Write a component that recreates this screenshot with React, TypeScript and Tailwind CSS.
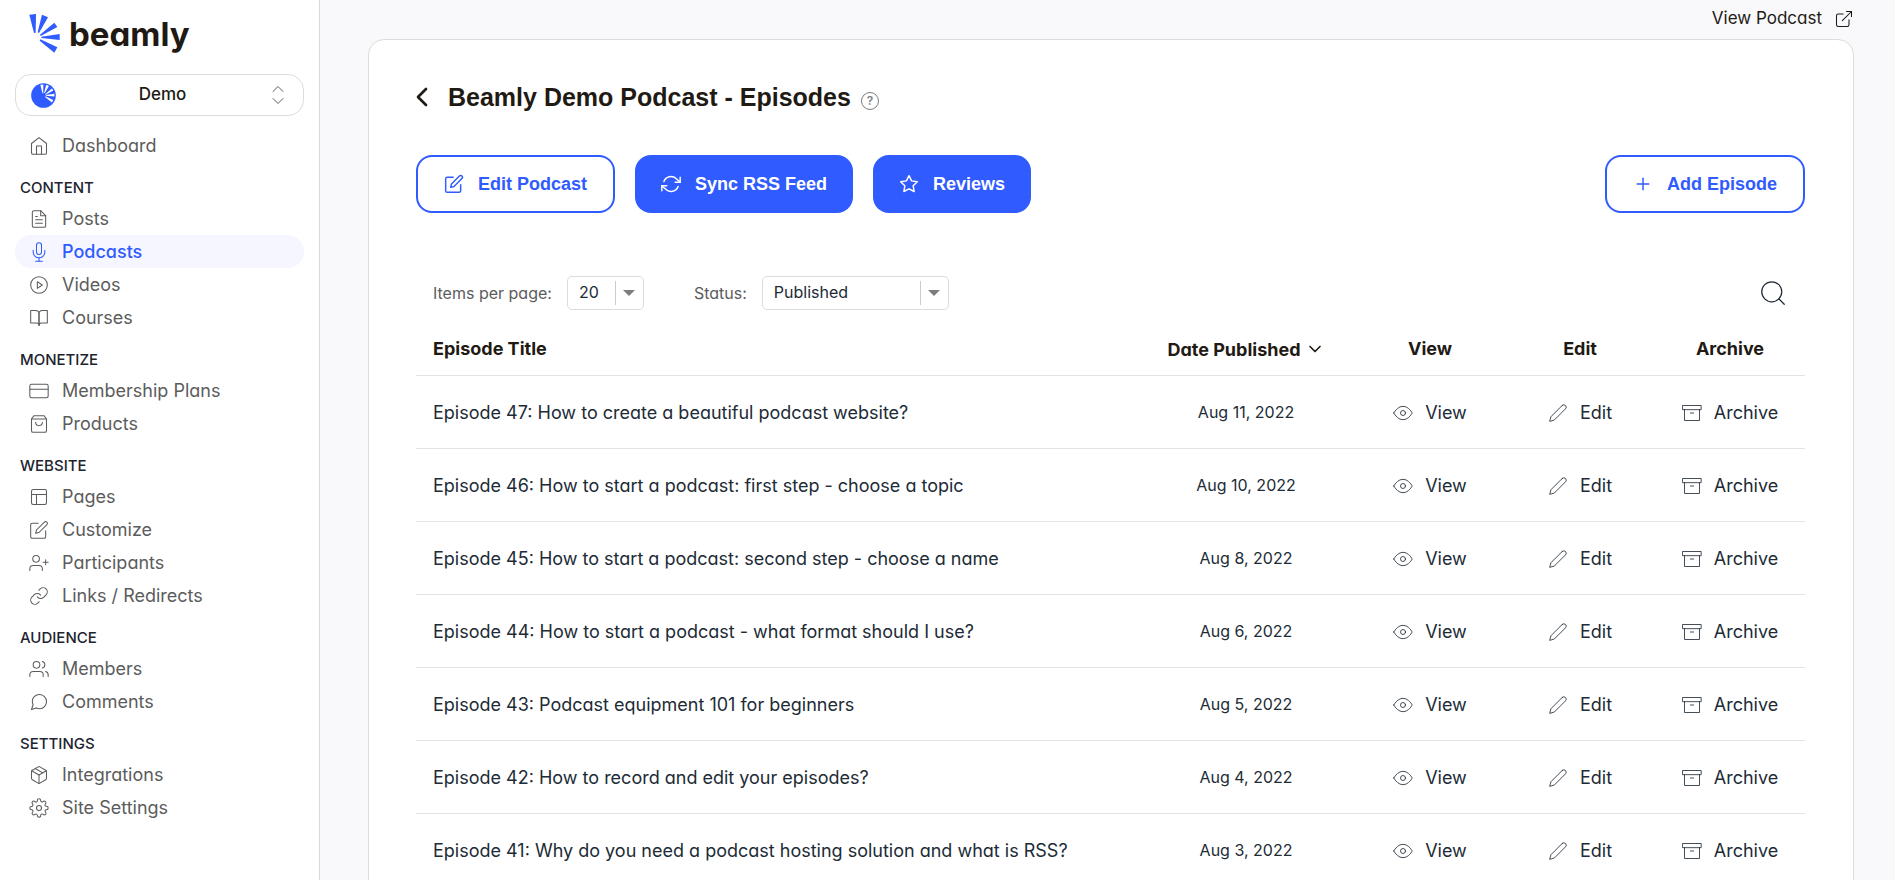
import { useState } from "react";
import { IconType } from "react-icons";
import {
  FiArchive,
  FiBookOpen,
  FiChevronDown,
  FiChevronLeft,
  FiCreditCard,
  FiEdit,
  FiEdit2,
  FiExternalLink,
  FiEye,
  FiFileText,
  FiHome,
  FiLayout,
  FiLink,
  FiMessageCircle,
  FiMic,
  FiPackage,
  FiPlayCircle,
  FiPlus,
  FiRefreshCw,
  FiSearch,
  FiSettings,
  FiShoppingBag,
  FiStar,
  FiUserPlus,
  FiUsers,
} from "react-icons/fi";

interface NavItem {
  label: string;
  icon: IconType;
}

interface NavSection {
  title?: string;
  items: NavItem[];
}

interface Episode {
  title: string;
  date: string;
}

const sections: NavSection[] = [
  { items: [{ label: "Dashboard", icon: FiHome }] },
  {
    title: "CONTENT",
    items: [
      { label: "Posts", icon: FiFileText },
      { label: "Podcasts", icon: FiMic },
      { label: "Videos", icon: FiPlayCircle },
      { label: "Courses", icon: FiBookOpen },
    ],
  },
  {
    title: "MONETIZE",
    items: [
      { label: "Membership Plans", icon: FiCreditCard },
      { label: "Products", icon: FiShoppingBag },
    ],
  },
  {
    title: "WEBSITE",
    items: [
      { label: "Pages", icon: FiLayout },
      { label: "Customize", icon: FiEdit },
      { label: "Participants", icon: FiUserPlus },
      { label: "Links / Redirects", icon: FiLink },
    ],
  },
  {
    title: "AUDIENCE",
    items: [
      { label: "Members", icon: FiUsers },
      { label: "Comments", icon: FiMessageCircle },
    ],
  },
  {
    title: "SETTINGS",
    items: [
      { label: "Integrations", icon: FiPackage },
      { label: "Site Settings", icon: FiSettings },
    ],
  },
];

const episodes: Episode[] = [
  { title: "Episode 47: How to create a beautiful podcast website?", date: "Aug 11, 2022" },
  { title: "Episode 46: How to start a podcast: first step - choose a topic", date: "Aug 10, 2022" },
  { title: "Episode 45: How to start a podcast: second step - choose a name", date: "Aug 8, 2022" },
  { title: "Episode 44: How to start a podcast - what format should I use?", date: "Aug 6, 2022" },
  { title: "Episode 43: Podcast equipment 101 for beginners", date: "Aug 5, 2022" },
  { title: "Episode 42: How to record and edit your episodes?", date: "Aug 4, 2022" },
  { title: "Episode 41: Why do you need a podcast hosting solution and what is RSS?", date: "Aug 3, 2022" },
];

const Beams = () => (
  <>
    <path d="M26 29 46 27 45 83 40 84Z" />
    <path d="M64 29 82 37 55 84 51 82Z" />
    <path d="M101 53 110 66 60 93 58 89Z" />
    <path d="M117 87 117 105 62 99 62 95Z" />
    <path d="M110 127 101 143 57 107 59 103Z" />
  </>
);

const Sidebar = () => {
  let [active, setActive] = useState("Podcasts");

  return (
    <aside className="w-80 shrink-0 border-r border-[#d9dadc] bg-white px-[15px]">
      <a href="#" className="flex items-center gap-2 pt-[13px] pl-[13px]">
        <svg viewBox="22 24 99 123" className="h-[41px] w-[33px] fill-[#2f5bff]">
          <Beams />
        </svg>
        <span className="text-[33px] leading-9 font-bold text-[#1f1a14]">
          beamly
        </span>
      </a>

      <button className="mt-5 flex h-[42px] w-full items-center justify-between rounded-2xl border border-[#dcdcdc] pr-4 pl-[15px]">
        <svg viewBox="0 0 76 76" className="size-[25px]">
          <circle cx="38" cy="38" r="37.5" className="fill-[#2f5bff]" />
          <g transform="translate(16 -8) scale(.47)" className="fill-white">
            <Beams />
          </g>
        </svg>
        <span className="text-[17px] font-medium text-[#1f1a14]">Demo</span>
        <svg
          viewBox="0 0 18 20"
          className="h-5 w-[18px] fill-none stroke-[#5c5c5c]"
          strokeLinecap="round"
          strokeLinejoin="round"
        >
          <path d="M4 6.500 9 1.500l5 5M4 13.500l5 5 5-5" />
        </svg>
      </button>

      <nav className="mt-[13px]">
        {sections.map((section) => (
          <div key={section.items[0].label}>
            {section.title && (
              <h3 className="pt-4 pb-1 pl-[5px] text-[15px] leading-5 font-medium text-[#1c2430]">
                {section.title}
              </h3>
            )}
            {section.items.map(({ label, icon: Icon }) => (
              <a
                key={label}
                href="#"
                onClick={() => setActive(label)}
                className={`flex h-[33px] items-center gap-[13px] rounded-2xl pl-[14px] text-[18px] ${
                  active === label
                    ? "bg-[#f5f6ff] font-medium text-[#2f5bff]"
                    : "text-[#5c5c5c]"
                }`}
              >
                <Icon size={20} strokeWidth={1.25} />
                {label}
              </a>
            ))}
          </div>
        ))}
      </nav>
    </aside>
  );
};

interface SelectProps {
  id: string;
  label: string;
  options: string[];
  className: string;
}

const Select = ({ id, label, options, className }: SelectProps) => (
  <div className="flex items-center gap-[15px]">
    <label htmlFor={id} className="text-[16px] text-[#5c5c5c]">
      {label}
    </label>
    <div className={`relative h-[34px] ${className}`}>
      <select
        id={id}
        className="size-full appearance-none rounded-[5px] border border-[#dcdcdc] bg-white pb-[2px] pl-[11px] text-[16px] text-[#212b36] outline-none"
      >
        {options.map((option) => (
          <option key={option}>{option}</option>
        ))}
      </select>
      <div className="pointer-events-none absolute inset-y-[5px] right-[9px] flex items-center gap-[7px]">
        <span className="h-full w-px bg-[#cccccc]" />
        <svg viewBox="0 0 12 6" className="h-[6px] w-3 fill-[#7d7d7d]">
          <path d="M0 0h12L6 6Z" />
        </svg>
      </div>
    </div>
  </div>
);

interface BoxedButtonProps {
  icon: IconType;
  filled?: boolean;
  children: string;
}

const BoxedButton = ({ icon: Icon, filled, children }: BoxedButtonProps) => (
  <button
    className={`flex h-[58px] items-center gap-[14px] rounded-2xl px-[26px] font-['Liberation_Sans',sans-serif] text-[18px] font-bold ${
      filled
        ? "bg-[#2f5bff] text-white"
        : "border-2 border-[#2f5bff] bg-white text-[#2f5bff]"
    }`}
  >
    <Icon size={20} strokeWidth={1.75} />
    {children}
  </button>
);

interface RowActionProps {
  icon: IconType;
  children: string;
}

const RowAction = ({ icon: Icon, children }: RowActionProps) => (
  <button className="inline-flex items-center gap-3 align-middle">
    <Icon size={20} strokeWidth={1} className="text-[#212b36]" />
    {children}
  </button>
);

const App = () => {
  return (
    <div className="flex h-screen overflow-hidden bg-[#f9f9fc] font-['Inter',sans-serif] [font-feature-settings:'cv11'] text-[#212b36]">
      <Sidebar />

      <main className="flex-1 overflow-y-auto pr-[41px] pl-12 [scrollbar-width:none]">
        <div className="flex h-[39px] justify-end pb-[2px]">
          <a href="#" className="flex items-center gap-3 text-[17px] text-[#1f1a14]">
            View Podcast
            <FiExternalLink size={20} strokeWidth={1.25} />
          </a>
        </div>

        <section className="rounded-2xl border border-[#dcdcdc] bg-white pt-[41px] pr-12 pb-12 pl-[47px]">
          <header className="flex items-center leading-8 text-[#1f1a14]">
            <button aria-label="Back" className="-ml-[10px]">
              <FiChevronLeft size={32} />
            </button>
            <h1 className="ml-[10px] font-['Liberation_Sans',sans-serif] text-[25px] font-bold">
              Beamly Demo Podcast - Episodes
            </h1>
            <button
              aria-label="Help"
              className="mt-2 ml-[10px] flex size-[18px] items-center justify-center rounded-full border border-[#7d7d7d] text-[12px] leading-none font-semibold text-[#7d7d7d]"
            >
              ?
            </button>
          </header>

          <div className="mt-[42px] flex gap-5">
            <BoxedButton icon={FiEdit}>Edit Podcast</BoxedButton>
            <BoxedButton icon={FiRefreshCw} filled>
              Sync RSS Feed
            </BoxedButton>
            <BoxedButton icon={FiStar} filled>
              Reviews
            </BoxedButton>
            <div className="ml-auto">
              <BoxedButton icon={FiPlus}>Add Episode</BoxedButton>
            </div>
          </div>

          <div className="mt-[63px] flex items-center gap-[50px] px-[17px]">
            <Select id="perPage" label="Items per page:" options={["20", "50", "100"]} className="w-[77px]" />
            <Select id="status" label="Status:" options={["Published", "Archived"]} className="w-[187px]" />
            <button aria-label="Search" className="ml-auto">
              <FiSearch size={30} strokeWidth={1} />
            </button>
          </div>

          <table className="mt-3 w-full table-fixed border-separate border-spacing-0 text-[18px]">
            <colgroup>
              <col />
              <col className="w-[218px]" />
              <col className="w-[150px]" />
              <col className="w-[150px]" />
              <col className="w-[150px]" />
            </colgroup>
            <thead>
              <tr className="text-[#1f1a14] *:h-[54px] *:border-b *:border-[#e1e3e6] *:font-bold">
                <th className="pl-[17px] text-left">Episode Title</th>
                <th>
                  <button className="inline-flex items-center gap-1 align-middle">
                    Date Published
                    <FiChevronDown size={20} strokeWidth={2} />
                  </button>
                </th>
                <th>View</th>
                <th>Edit</th>
                <th>Archive</th>
              </tr>
            </thead>
            <tbody>
              {episodes.map((episode) => (
                <tr key={episode.title} className="text-center *:h-[73px] *:border-b *:border-[#e1e3e6]">
                  <td className="pl-[17px] text-left">{episode.title}</td>
                  <td className="text-[16px]">{episode.date}</td>
                  <td>
                    <RowAction icon={FiEye}>View</RowAction>
                  </td>
                  <td>
                    <RowAction icon={FiEdit2}>Edit</RowAction>
                  </td>
                  <td>
                    <RowAction icon={FiArchive}>Archive</RowAction>
                  </td>
                </tr>
              ))}
            </tbody>
          </table>
        </section>
      </main>
    </div>
  );
};

export default App;
